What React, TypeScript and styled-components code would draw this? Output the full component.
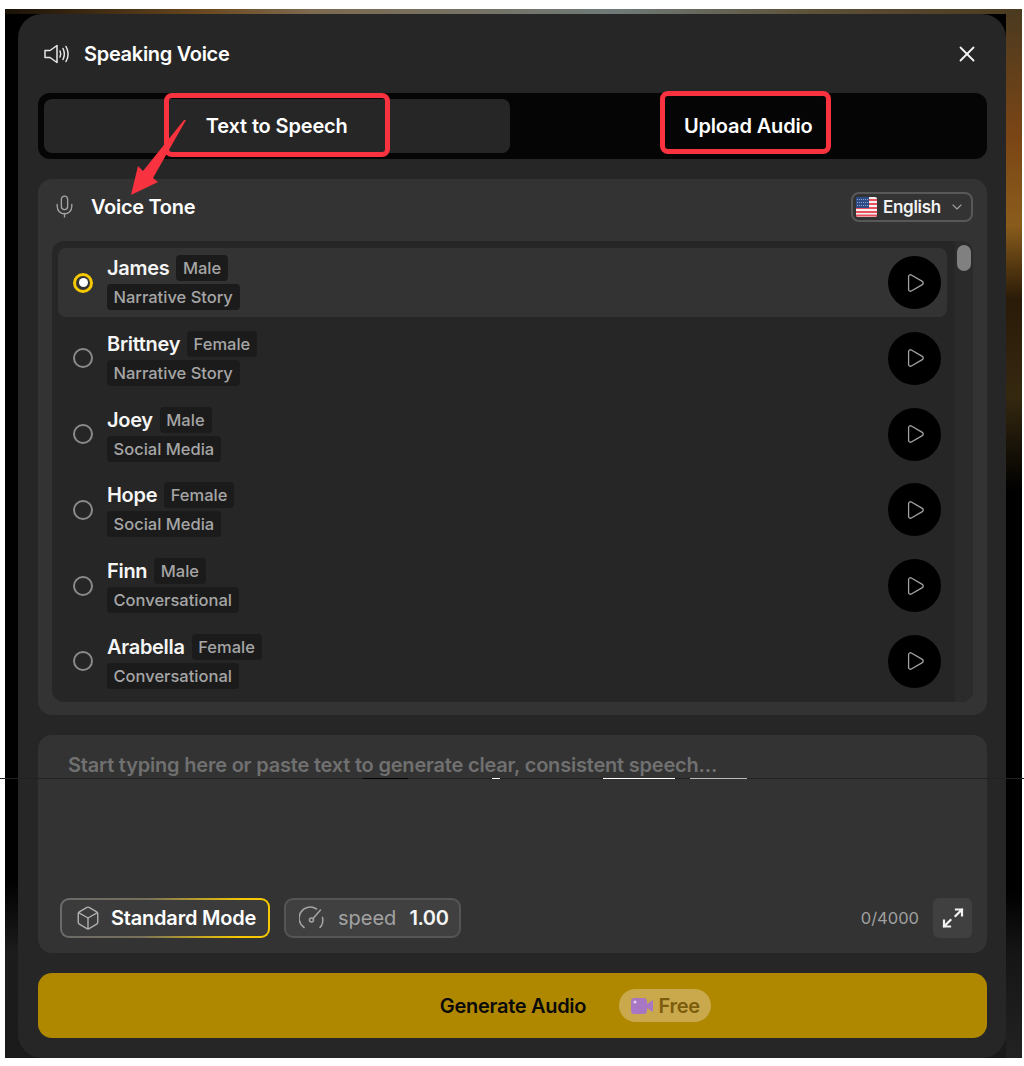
import React from "react";
import styled, { createGlobalStyle } from "styled-components";
import { Box, ChevronDown, Mic, Play, X } from "lucide-react";

interface Voice {
    name: string
    gender: string
    style: string
}

const voices: Voice[] = [
    { name: "James", gender: "Male", style: "Narrative Story" },
    { name: "Brittney", gender: "Female", style: "Narrative Story" },
    { name: "Joey", gender: "Male", style: "Social Media" },
    { name: "Hope", gender: "Female", style: "Social Media" },
    { name: "Finn", gender: "Male", style: "Conversational" },
    { name: "Arabella", gender: "Female", style: "Conversational" },
];

const GlobalStyle = createGlobalStyle`
  html, body {
    margin: 0;
    background: #fff;
  }
  body {
    font-family: Inter, "Liberation Sans", sans-serif;
  }
  * {
    box-sizing: border-box;
  }
`;

const Page = styled.div`
  position: relative;
  width: 1024px;
  height: 1066px;
  padding: 9px 2px 8px 5px;
  overflow: hidden;
`;

const Backdrop = styled.div`
  height: 100%;
  padding: 5px 16px 0 13px;
  background:
    linear-gradient(90deg, #1a1208 0, #6b4a20 20%, #7d6a50 30%, #6f7a78 60%, #5c5036 80%, #4a3a20 100%) top / 100% 5px no-repeat,
    linear-gradient(180deg, #4a3a20 0, #7a4515 12%, #8a5c1c 20.6%, #2a1a08 27.7%, #352810 37%, #000 46%, #000 84%, #151515 90%, #222 100%) right / 16px 100% no-repeat,
    linear-gradient(180deg, #000 0, #000 83%, #1c1c1c 90%, #1a1a1a 100%);
`;

const Modal = styled.div`
  height: 100%;
  padding: 0 19px 0 20px;
  background: #262626;
  border-radius: 24px;
  display: flex;
  flex-direction: column;
`;

const Header = styled.div`
  height: 79px;
  display: flex;
  align-items: center;
  gap: 14px;
  padding: 0 7px 0 6px;
  color: #fff;
`;

const Title = styled.div`
  flex: 1;
  font-size: 20px;
  font-weight: 600;
  letter-spacing: -0.3px;
`;

const Tabs = styled.div`
  height: 66px;
  padding: 6px;
  background: #050505;
  border-radius: 12px;
  display: grid;
  grid-template-columns: 1fr 1fr;
  gap: 6px;
`;

const Tab = styled.div<{ $active?: boolean }>`
  display: flex;
  align-items: center;
  justify-content: center;
  background: ${p => (p.$active ? "#262626" : "transparent")};
  border-radius: 8px;
  color: #fff;
  font-size: 20px;
  font-weight: 600;
  letter-spacing: -0.15px;
`;

const VoicePanel = styled.div`
  margin-top: 20px;
  height: 536px;
  padding: 0 14px 13px;
  background: #333;
  border-radius: 14px;
  display: flex;
  flex-direction: column;
`;

const PanelHeader = styled.div`
  height: 62px;
  flex: none;
  padding: 0 0 7px;
  display: flex;
  align-items: center;
  gap: 14px;
  color: #fff;
  font-size: 20px;
  font-weight: 600;
  letter-spacing: -0.3px;
  svg {
    color: #a3a3a3;
  }
`;

const PanelTitle = styled.div`
  flex: 1;
`;

const LangSelect = styled.div`
  width: 122px;
  height: 30px;
  display: flex;
  align-items: center;
  gap: 6px;
  padding: 0 6px 0 3px;
  border: 2px solid #585858;
  border-radius: 8px;
  font-size: 17px;
  font-weight: 600;
  letter-spacing: -0.3px;
  color: #f2f2f2;
  svg:last-child {
    margin-left: auto;
    color: #a0a0a0;
  }
`;

const ListBox = styled.div`
  flex: 1;
  background: #262626;
  border-radius: 12px;
  display: flex;
  overflow: hidden;
`;

const Rows = styled.div`
  flex: 1;
  padding: 7px 8px 0 6px;
  display: flex;
  flex-direction: column;
  gap: 6.8px;
`;

const Row = styled.div<{ $selected?: boolean }>`
  height: 69px;
  flex: none;
  display: flex;
  align-items: center;
  padding: 0 6px 0 15px;
  background: ${p => (p.$selected ? "#333" : "transparent")};
  border-radius: 8px;
`;

const Radio = styled.div<{ $on?: boolean }>`
  width: 20px;
  height: 20px;
  flex: none;
  border-radius: 50%;
  border: ${p => (p.$on ? "3px solid #f5c800" : "2px solid #8a8a8a")};
  display: flex;
  align-items: center;
  justify-content: center;
  &::after {
    content: "";
    display: ${p => (p.$on ? "block" : "none")};
    width: 9px;
    height: 9px;
    border-radius: 50%;
    background: #fff;
  }
`;

const RowText = styled.div`
  flex: 1;
  margin-left: 14px;
  display: flex;
  flex-direction: column;
  gap: 3px;
`;

const NameLine = styled.div`
  display: flex;
  align-items: center;
  gap: 7px;
`;

const Name = styled.span`
  color: #f5f5f5;
  font-size: 20px;
  font-weight: 600;
  letter-spacing: -0.3px;
`;

const Tag = styled.span`
  height: 26px;
  padding: 0 7px 0 6.500px;
  align-self: flex-start;
  display: inline-flex;
  align-items: center;
  background: #1b1b1b;
  border-radius: 4px;
  color: #a6a6a6;
  font-size: 16.5px;
  font-weight: 500;
`;

const PlayButton = styled.div`
  width: 53px;
  height: 53px;
  border-radius: 50%;
  background: #000;
  color: #a3a3a3;
  display: flex;
  align-items: center;
  justify-content: center;
`;

const ScrollTrack = styled.div`
  width: 18px;
  flex: none;
  padding: 4px 2px;
  background: #2b2b2b;
`;

const ScrollThumb = styled.div`
  height: 26px;
  background: #808080;
  border-radius: 7px;
`;

const TextPanel = styled.div`
  margin-top: 20px;
  height: 218px;
  padding: 18px 15px 15px 22px;
  background: #333;
  border-radius: 14px;
  display: flex;
  flex-direction: column;
`;

const Placeholder = styled.div`
  flex: 1;
  padding-left: 8px;
  color: #707070;
  font-size: 20px;
  font-weight: 600;
  letter-spacing: -0.2px;
  line-height: 24px;
`;

const Controls = styled.div`
  display: flex;
  align-items: center;
  gap: 14px;
`;

const ModeButton = styled.div`
  width: 210px;
  height: 40px;
  display: flex;
  align-items: center;
  gap: 10px;
  padding-left: 13px;
  border-radius: 9px;
  color: #fff;
  font-size: 20px;
  font-weight: 600;
  letter-spacing: -0.2px;
  background:
    linear-gradient(#3b3b3b, #3b3b3b) padding-box,
    linear-gradient(100deg, #6a6a6a 0%, #77705a 40%, #f5c800 85%) border-box;
  border: 2px solid transparent;
  svg {
    color: #b0b0b0;
  }
`;

const SpeedButton = styled.div`
  width: 177px;
  height: 40px;
  display: flex;
  align-items: center;
  padding-left: 13px;
  background: #404040;
  border: 2px solid #555;
  border-radius: 9px;
`;

const SpeedLabel = styled.span`
  margin-left: 13px;
  color: #a3a3a3;
  font-size: 20px;
`;

const SpeedValue = styled.span`
  margin-left: 13px;
  color: #f5f5f5;
  font-size: 20px;
  font-weight: 600;
  letter-spacing: -0.4px;
`;

const Counter = styled.span`
  margin-left: auto;
  color: #a0a0a0;
  font-size: 16.5px;
`;

const ExpandButton = styled.div`
  width: 39px;
  height: 40px;
  background: #404040;
  border-radius: 6px;
  display: flex;
  align-items: center;
  justify-content: center;
`;

const Generate = styled.div`
  margin-top: 20px;
  height: 65px;
  padding-left: 126px;
  background: #b08800;
  border-radius: 14px;
  display: flex;
  align-items: center;
  justify-content: center;
  gap: 33px;
  color: #0a0a0a;
  font-size: 20px;
  font-weight: 600;
  letter-spacing: -0.3px;
`;

const FreePill = styled.div`
  width: 92px;
  height: 33px;
  background: #c9a94c;
  border-radius: 17px;
  display: flex;
  align-items: center;
  justify-content: center;
  gap: 5px;
  color: #7d5c0c;
  font-size: 20px;
  font-weight: 600;
`;

/* red call-outs drawn on top of the screenshot */
const Callout = styled.div<{ $left: number; $top: number; $w: number; $h: number }>`
  position: absolute;
  left: ${p => p.$left}px;
  top: ${p => p.$top}px;
  width: ${p => p.$w}px;
  height: ${p => p.$h}px;
  border: 5px solid #f9323f;
  border-radius: 8px;
  pointer-events: none;
`;

const ArrowSvg = styled.svg`
  position: absolute;
  left: 120px;
  top: 110px;
`;

const Seam = styled.div`
  position: absolute;
  left: 0;
  top: 778px;
  width: 1024px;
  height: 1px;
  background: linear-gradient(90deg,
    #222 0, #222 363px, #000 363px, #000 408px, #222 408px, #222 492px,
    #fff 492px, #fff 500px, #222 500px, #222 603px, #fff 603px, #fff 675px,
    #222 675px, #222 690px, #bbb 690px, #bbb 747px, #222 747px);
`;

const SpeakerIcon = () => (
    <svg width="26" height="20" viewBox="0 0 26 20" fill="none" stroke="#e8e8e8" strokeWidth="1.5" strokeLinecap="round" strokeLinejoin="round">
        <path d="M1 6.5h5L13 1.5v17L6 13.5H1z" />
        <path d="M16 7c.9 1.8.9 4.2 0 6" />
        <path d="M19 4.5c1.7 3.4 1.7 7.600 0 11" />
        <path d="M22 2.500c2.600 4.600 2.600 10.400 0 15" />
    </svg>
);

const GaugeIcon = () => (
    <svg width="26" height="24" viewBox="0 0 26 24" fill="none" stroke="#a3a3a3" strokeWidth="1.6" strokeLinecap="round">
        <path d="M5 21.500A11 11 0 0 1 17.500 3" />
        <path d="M21 21.500a11 11 0 0 0 2.500-10" />
        <circle cx="12.500" cy="14" r="2" />
        <path d="M14 12.500L21.500 4" />
    </svg>
);

const FlagIcon = () => (
    <svg width="21" height="20" viewBox="0 0 21 20">
        <rect width="21" height="20" rx="2" fill="#f4f0f0" />
        <path d="M0 3h21M0 7h21M0 11h21M0 15h21M0 18.500h21" stroke="#e8505f" strokeWidth="2" />
        <rect width="13" height="11" fill="#2f4b86" />
        <path d="M1 2.500h11M1 5.500h11M1 8.500h11" stroke="#8fa3cf" strokeWidth="1" strokeDasharray="1 1" />
    </svg>
);

const ExpandIcon = () => (
    <svg width="22" height="22" viewBox="0 0 22 22" fill="none" stroke="#f2f2f2" strokeWidth="2.200" strokeLinecap="square">
        <path d="M14 2.500h6v6M20 2.500l-6.500 6.500" />
        <path d="M8 19.500H2v-6M2 19.500l6.500-6.500" />
    </svg>
);

const VideoIcon = () => (
    <svg width="23" height="16" viewBox="0 0 23 16">
        <rect width="16" height="16" rx="3.500" fill="#a877c4" />
        <circle cx="4" cy="4" r="1.500" fill="#e6d0ee" />
        <path d="M16 6l6-4v12l-6-4z" fill="#a877c4" />
    </svg>
);

export default function App() {
    return (
        <Page>
            <GlobalStyle />
            <Backdrop>
                <Modal>
                    <Header>
                        <SpeakerIcon />
                        <Title>Speaking Voice</Title>
                        <X size={26} strokeWidth={1.7} color="#f2f2f2" />
                    </Header>
                    <Tabs>
                        <Tab $active>Text to Speech</Tab>
                        <Tab>Upload Audio</Tab>
                    </Tabs>
                    <VoicePanel>
                        <PanelHeader>
                            <Mic size={25} strokeWidth={1.3} />
                            <PanelTitle>Voice Tone</PanelTitle>
                            <LangSelect>
                                <FlagIcon />
                                English
                                <ChevronDown size={16} strokeWidth={1.6} />
                            </LangSelect>
                        </PanelHeader>
                        <ListBox>
                            <Rows>
                                {voices.map((v, i) => (
                                    <Row key={v.name} $selected={i === 0}>
                                        <Radio $on={i === 0} />
                                        <RowText>
                                            <NameLine>
                                                <Name>{v.name}</Name>
                                                <Tag>{v.gender}</Tag>
                                            </NameLine>
                                            <Tag>{v.style}</Tag>
                                        </RowText>
                                        <PlayButton>
                                            <Play size={22} strokeWidth={1.4} />
                                        </PlayButton>
                                    </Row>
                                ))}
                            </Rows>
                            <ScrollTrack>
                                <ScrollThumb />
                            </ScrollTrack>
                        </ListBox>
                    </VoicePanel>
                    <TextPanel>
                        <Placeholder>Start typing here or paste text to generate clear, consistent speech...</Placeholder>
                        <Controls>
                            <ModeButton>
                                <Box size={26} strokeWidth={1.3} />
                                Standard Mode
                            </ModeButton>
                            <SpeedButton>
                                <GaugeIcon />
                                <SpeedLabel>speed</SpeedLabel>
                                <SpeedValue>1.00</SpeedValue>
                            </SpeedButton>
                            <Counter>0/4000</Counter>
                            <ExpandButton>
                                <ExpandIcon />
                            </ExpandButton>
                        </Controls>
                    </TextPanel>
                    <Generate>
                        Generate Audio
                        <FreePill>
                            <VideoIcon />
                            Free
                        </FreePill>
                    </Generate>
                </Modal>
            </Backdrop>
            <Seam />
            <Callout $left={164} $top={93} $w={226} $h={64} />
            <Callout $left={660} $top={91} $w={171} $h={63} />
            <ArrowSvg width="70" height="90" viewBox="120 110 70 90">
                <path d="M186 120L153 178l5 4-27 13 7-29 5 5L184 120z" fill="#f9323f" />
            </ArrowSvg>
        </Page>
    );
}
